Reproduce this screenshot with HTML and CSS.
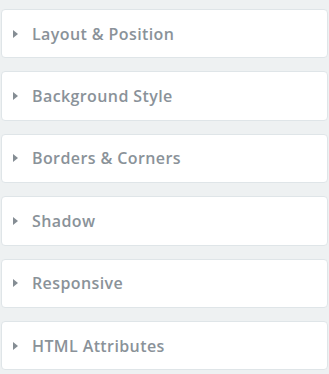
FILE: index.html
```html
<!DOCTYPE html>
<html>
<head>
<meta charset="utf-8">
<link rel="stylesheet" href="styles.css">
</head>
<body>
<div class="panel">
  <div class="section"><span class="caret"></span><span class="title">Layout &amp; Position</span></div>
  <div class="section"><span class="caret"></span><span class="title">Background Style</span></div>
  <div class="section"><span class="caret"></span><span class="title">Borders &amp; Corners</span></div>
  <div class="section"><span class="caret"></span><span class="title">Shadow</span></div>
  <div class="section"><span class="caret"></span><span class="title">Responsive</span></div>
  <div class="section"><span class="caret"></span><span class="title">HTML Attributes</span></div>
</div>
</body>
</html>
```
FILE: styles.css
```css
html, body {
  margin: 0;
  padding: 0;
  background: #eef1f2;
}
.panel {
  display: flex;
  flex-direction: column;
  gap: 13px;
  padding: 9px 1px 0 1px;
}
.section {
  box-sizing: border-box;
  height: 49.4px;
  background: #ffffff;
  border: 1px solid #dfe5e8;
  border-radius: 4px;
  display: flex;
  align-items: center;
  padding-left: 11px;
}
.caret {
  width: 0;
  height: 0;
  border-top: 4px solid transparent;
  border-bottom: 4px solid transparent;
  border-left: 5px solid #858d94;
  margin-right: 14px;
}
.title {
  font-family: "Open Sans", "Noto Sans", sans-serif;
  font-weight: 600;
  font-size: 16px;
  letter-spacing: 0.4px;
  color: #8a9299;
}
```
